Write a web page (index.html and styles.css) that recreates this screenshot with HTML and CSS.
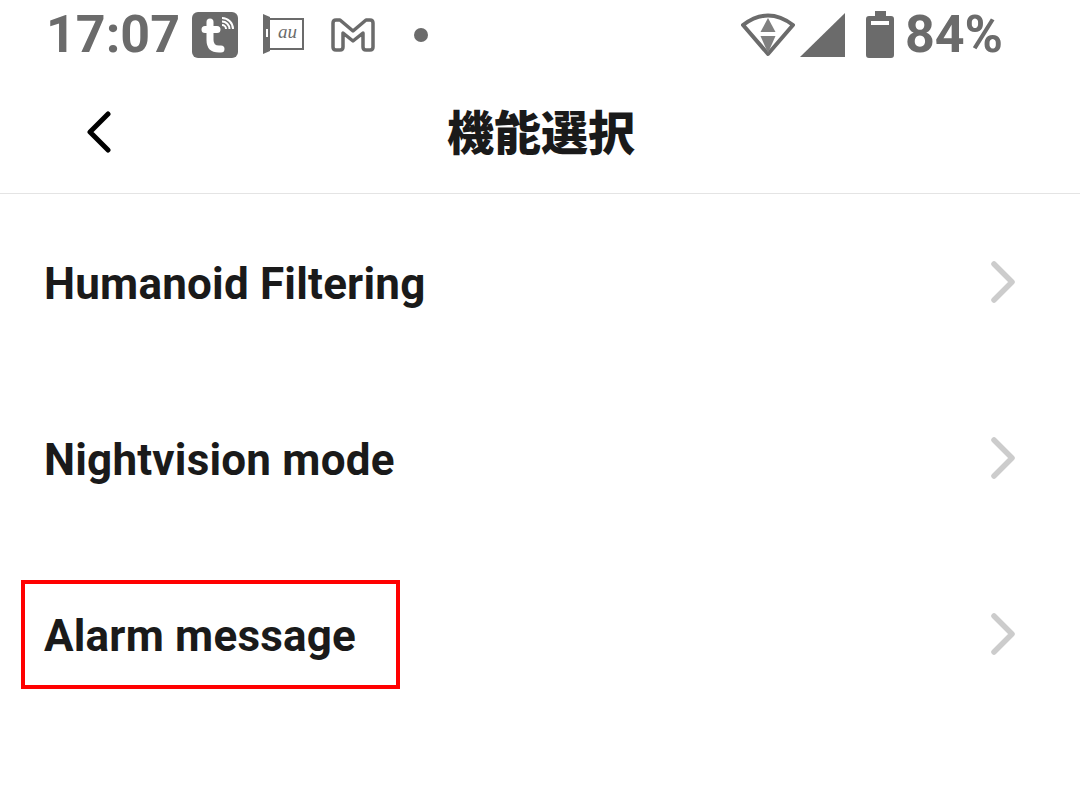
FILE: index.html

```html
<!DOCTYPE html>
<html lang="ja">
<head>
  <meta charset="UTF-8" />
  <title>機能選択</title>
  <link rel="stylesheet" href="styles.css">
</head>
<body>
  <div class="status-bar">
    <div class="status-left">
      <span class="status-text">17:07</span>
      <svg class="icon-tuya" width="46" height="46" viewBox="0 0 46 46">
        <rect width="46" height="46" rx="6" fill="#6b6b6b"/>
        <path d="M18 10V28Q18 37 27 37H29M13 17.500H25" fill="none" stroke="#fff" stroke-width="7" stroke-linecap="round"/>
        <path d="M30 13A4 4 0 0 1 34 17M30 9.500A7.500 7.500 0 0 1 37.500 17M30 6A11 11 0 0 1 41 17" fill="none" stroke="#fff" stroke-width="2"/>
      </svg>
      <svg class="icon-au" width="41" height="44" viewBox="0 0 41 44">
        <path d="M7 6H40V36H7" fill="none" stroke="#6b6b6b" stroke-width="2"/>
        <path d="M0 1L7 4V38L0 41Z" fill="#6b6b6b"/>
        <rect x="3" y="16" width="2" height="8" fill="#fff"/>
        <text x="15" y="25" class="au-text">au</text>
      </svg>
      <svg class="icon-mail" width="44" height="34" viewBox="0 0 44 34">
        <path d="M2 5Q2 2 5 2H9L22 13L35 2H39Q42 2 42 5V29Q42 32 39 32H35Q32 32 32 29V15L22 23L12 15V29Q12 32 9 32H5Q2 32 2 29Z" fill="none" stroke="#6b6b6b" stroke-width="3.500" stroke-linejoin="round"/>
      </svg>
      <span class="dot"></span>
    </div>
    <div class="status-right">
      <svg class="icon-wifi" width="54" height="44" viewBox="0 0 54 44">
        <path d="M2 12Q27 -7 52 12L27 41Z" fill="none" stroke="#6b6b6b" stroke-width="4" stroke-linejoin="round"/>
        <path d="M27 5L34.500 19H19.500Z" fill="#808080"/>
        <path d="M19.500 23H34.500L27 40Z" fill="#808080"/>
      </svg>
      <svg class="icon-signal" width="45" height="44" viewBox="0 0 45 44">
        <path d="M45 0V44H0Z" fill="#6b6b6b"/>
      </svg>
      <svg class="icon-battery" width="28" height="47" viewBox="0 0 28 47">
        <path d="M9 0H20V5H25Q28 5 28 8V44Q28 47 25 47H3Q0 47 0 44V8Q0 5 3 5H9Z" fill="#6b6b6b"/>
        <rect x="5" y="10" width="18" height="4" fill="#fff"/>
      </svg>
      <span class="status-text">84%</span>
    </div>
  </div>

  <div class="header">
    <svg class="back" width="26" height="42" viewBox="0 0 26 42">
      <path d="M22 3L4 21L22 39" fill="none" stroke="#000" stroke-width="5" stroke-linecap="round" stroke-linejoin="round"/>
    </svg>
    <h1>機能選択</h1>
  </div>

  <div class="list">
    <div class="row">
      <span>Humanoid Filtering</span>
      <svg class="chevron" width="26" height="42" viewBox="0 0 26 42"><path d="M3 3L21 21L3 39" /></svg>
    </div>
    <div class="row">
      <span>Nightvision mode</span>
      <svg class="chevron" width="26" height="42" viewBox="0 0 26 42"><path d="M3 3L21 21L3 39" /></svg>
    </div>
    <div class="row">
      <span>Alarm message</span>
      <svg class="chevron" width="26" height="42" viewBox="0 0 26 42"><path d="M3 3L21 21L3 39" /></svg>
      <div class="highlight"></div>
    </div>
  </div>
</body>
</html>
```

FILE: styles.css

```css
html, body {
  margin: 0;
  padding: 0;
}
body {
  width: 1080px;
  height: 791px;
  overflow: hidden;
  background: #fff;
  font-family: Roboto, "Noto Sans CJK JP", sans-serif;
}
.status-bar {
  height: 68px;
  display: flex;
  justify-content: space-between;
  align-items: center;
  padding: 2px 77px 0 46px;
  box-sizing: border-box;
}
.status-left, .status-right {
  display: flex;
  align-items: center;
}
.status-text {
  font-size: 52px;
  font-weight: 700;
  color: #6b6b6b;
  line-height: 68px;
}
.icon-tuya {
  margin-left: 12px;
}
.icon-au {
  margin-left: 25px;
}
.icon-mail {
  margin-left: 27px;
}
.au-text {
  font-family: "Liberation Serif", serif;
  font-style: italic;
  font-size: 19px;
  fill: #6b6b6b;
}
.dot {
  width: 14px;
  height: 14px;
  margin-left: 39px;
  border-radius: 50%;
  background: #6b6b6b;
}
.icon-signal {
  margin-left: 5px;
}
.icon-battery {
  margin-left: 21px;
  margin-bottom: 2px;
}
.status-right .status-text {
  margin-left: 11px;
}
.header {
  position: relative;
  height: 125px;
  border-bottom: 1px solid #e4e4e4;
  display: flex;
  align-items: center;
  justify-content: center;
  padding-left: 2px;
}
.header h1 {
  margin: 0 0 2px;
  font-size: 47px;
  font-weight: 900;
  color: #1a1a1a;
}
.back {
  position: absolute;
  left: 86px;
  top: 43px;
}
.row {
  position: relative;
  height: 176px;
  display: flex;
  align-items: center;
  justify-content: space-between;
  padding: 0 63px 0 44px;
  font-size: 44px;
  font-weight: 700;
  letter-spacing: 0.2px;
  color: #1a1a1a;
}
.row span {
  margin-top: 4px;
}
.chevron path {
  fill: none;
  stroke: #cccccc;
  stroke-width: 5.500px;
  stroke-linecap: round;
  stroke-linejoin: round;
}
.highlight {
  position: absolute;
  left: 21px;
  top: 34px;
  width: 371px;
  height: 101px;
  border: 4px solid #ff0000;
}
```
